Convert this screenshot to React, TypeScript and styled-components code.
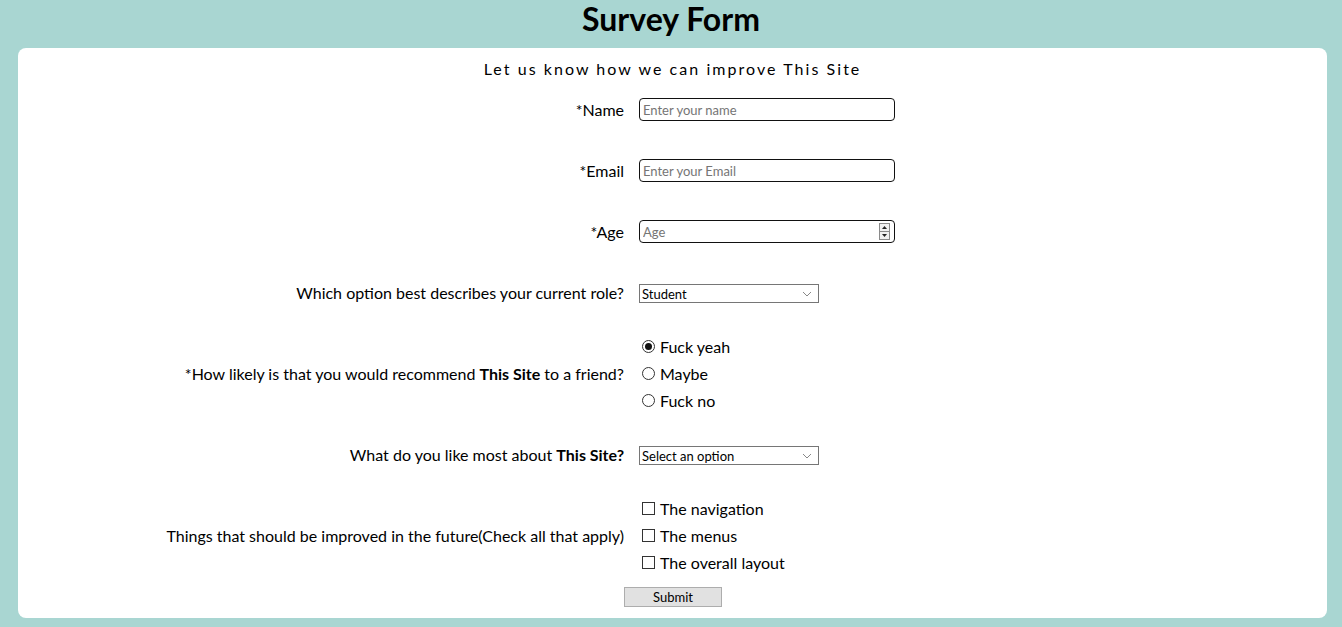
import React from 'react';
import styled, { createGlobalStyle } from 'styled-components';

const GlobalStyle = createGlobalStyle`
  html, body {
    margin: 0;
    padding: 0;
    background: #a9d6d2;
    font-family: Lato, "Noto Sans", sans-serif;
    color: #000;
  }
`;

const Page = styled.div`
  min-height: 627px;
  padding-bottom: 9px;
  box-sizing: border-box;
`;

const Title = styled.h1`
  margin: 0;
  text-align: center;
  font-size: 32px;
  line-height: 38px;
  font-weight: 700;
`;

const Card = styled.form`
  margin: 10px 15px 0 18px;
  background: #fff;
  border-radius: 8px;
  padding: 10px 0 11px;
  display: flex;
  flex-direction: column;
`;

const Subtitle = styled.p`
  margin: 0;
  text-align: center;
  font-size: 16px;
  line-height: 22px;
  letter-spacing: 2.05px;
`;

const Row = styled.div<{ $top: number }>`
  display: grid;
  grid-template-columns: 606px 1fr;
  column-gap: 15px;
  align-items: center;
  margin-top: ${p => p.$top}px;
`;

const Label = styled.label`
  text-align: right;
  font-size: 16px;
  line-height: 22px;

  b {
    font-weight: 700;
  }
`;

const Field = styled.div`
  position: relative;
  width: 256px;
`;

const TextInput = styled.input`
  box-sizing: border-box;
  width: 256px;
  height: 23px;
  border: 1px solid #111;
  border-radius: 4px;
  padding: 0 3px;
  font-family: inherit;
  font-size: 13px;
  outline: none;
  -moz-appearance: textfield;

  &::placeholder {
    color: #757575;
  }

  &::-webkit-inner-spin-button,
  &::-webkit-outer-spin-button {
    -webkit-appearance: none;
    margin: 0;
  }
`;

const Spinner = styled.span`
  position: absolute;
  right: 5px;
  top: 3px;
  width: 11px;
  height: 17px;
  border: 1px solid #8a8a8a;
  box-sizing: border-box;
  background: #f0f0f0;
  display: flex;
  flex-direction: column;

  span {
    flex: 1;
    display: flex;
    align-items: center;
    justify-content: center;
  }

  span + span {
    border-top: 1px solid #8a8a8a;
  }
`;

const Select = styled.select`
  width: 180px;
  height: 19px;
  border: 1px solid #767676;
  border-radius: 0;
  background: #fff;
  font-family: inherit;
  font-size: 13px;
  padding: 0 2px;
  appearance: none;
  background-image: url("data:image/svg+xml,%3Csvg xmlns='http://www.w3.org/2000/svg' width='10' height='6'%3E%3Cpath d='M1 1l4 4 4-4' fill='none' stroke='%23888' stroke-width='1'/%3E%3C/svg%3E");
  background-repeat: no-repeat;
  background-position: right 6px center;
  outline: none;
  color: #000;
`;

const Options = styled.div`
  display: flex;
  flex-direction: column;
`;

const Option = styled.label`
  display: flex;
  align-items: center;
  font-size: 16px;
  line-height: 27px;
`;

const Radio = styled.input.attrs({ type: 'radio' })`
  appearance: none;
  box-sizing: border-box;
  margin: 0 5px 0 3px;
  width: 13px;
  height: 13px;
  border: 1px solid #333;
  border-radius: 50%;
  background: #fff;
  display: grid;
  place-items: center;

  &:checked::after {
    content: '';
    width: 7px;
    height: 7px;
    border-radius: 50%;
    background: #111;
  }
`;

const Checkbox = styled.input.attrs({ type: 'checkbox' })`
  appearance: none;
  box-sizing: border-box;
  margin: 0 5px 0 3px;
  width: 13px;
  height: 13px;
  border: 1px solid #333;
  border-radius: 0;
  background: #fff;
`;

const SubmitRow = styled.div`
  display: flex;
  justify-content: flex-start;
  padding-left: 606px;
  margin-top: 11px;
`;

const SubmitButton = styled.button`
  width: 98px;
  height: 20px;
  background: #e1e1e1;
  border: 1px solid #adadad;
  font-family: inherit;
  font-size: 13px;
  padding: 0;
  color: #000;
`;

const Tri = ({ up }: { up?: boolean }) => (
  <svg width="5" height="3" viewBox="0 0 5 3">
    <path d={up ? 'M0 3 L2.5 0 L5 3 Z' : 'M0 0 L2.5 3 L5 0 Z'} fill="#222" />
  </svg>
);

export default function App() {
  return (
    <Page>
      <GlobalStyle />
      <Title>Survey Form</Title>
      <Card onSubmit={e => e.preventDefault()}>
        <Subtitle>Let us know how we can improve This Site</Subtitle>

        <Row $top={18}>
          <Label htmlFor="name">*Name</Label>
          <Field>
            <TextInput id="name" type="text" placeholder="Enter your name" />
          </Field>
        </Row>

        <Row $top={38}>
          <Label htmlFor="email">*Email</Label>
          <Field>
            <TextInput id="email" type="email" placeholder="Enter your Email" />
          </Field>
        </Row>

        <Row $top={38}>
          <Label htmlFor="age">*Age</Label>
          <Field>
            <TextInput id="age" type="number" placeholder="Age" />
            <Spinner>
              <span><Tri up /></span>
              <span><Tri /></span>
            </Spinner>
          </Field>
        </Row>

        <Row $top={39}>
          <Label htmlFor="role">Which option best describes your current role?</Label>
          <div>
            <Select id="role" defaultValue="student">
              <option value="student">Student</option>
              <option value="job">Full Time Job</option>
              <option value="learner">Full Time Learner</option>
              <option value="other">Other</option>
            </Select>
          </div>
        </Row>

        <Row $top={29}>
          <Label>*How likely is that you would recommend <b>This Site</b> to a friend?</Label>
          <Options>
            <Option><Radio name="rec" defaultChecked /> Fuck yeah</Option>
            <Option><Radio name="rec" /> Maybe</Option>
            <Option><Radio name="rec" /> Fuck no</Option>
          </Options>
        </Row>

        <Row $top={30}>
          <Label htmlFor="like">What do you like most about <b>This Site?</b></Label>
          <div>
            <Select id="like" defaultValue="">
              <option value="">Select an option</option>
              <option value="design">Design</option>
              <option value="content">Content</option>
            </Select>
          </div>
        </Row>

        <Row $top={29}>
          <Label>Things that should be improved in the future(Check all that apply)</Label>
          <Options>
            <Option><Checkbox /> The navigation</Option>
            <Option><Checkbox /> The menus</Option>
            <Option><Checkbox /> The overall layout</Option>
          </Options>
        </Row>

        <SubmitRow>
          <SubmitButton type="submit">Submit</SubmitButton>
        </SubmitRow>
      </Card>
    </Page>
  );
}
